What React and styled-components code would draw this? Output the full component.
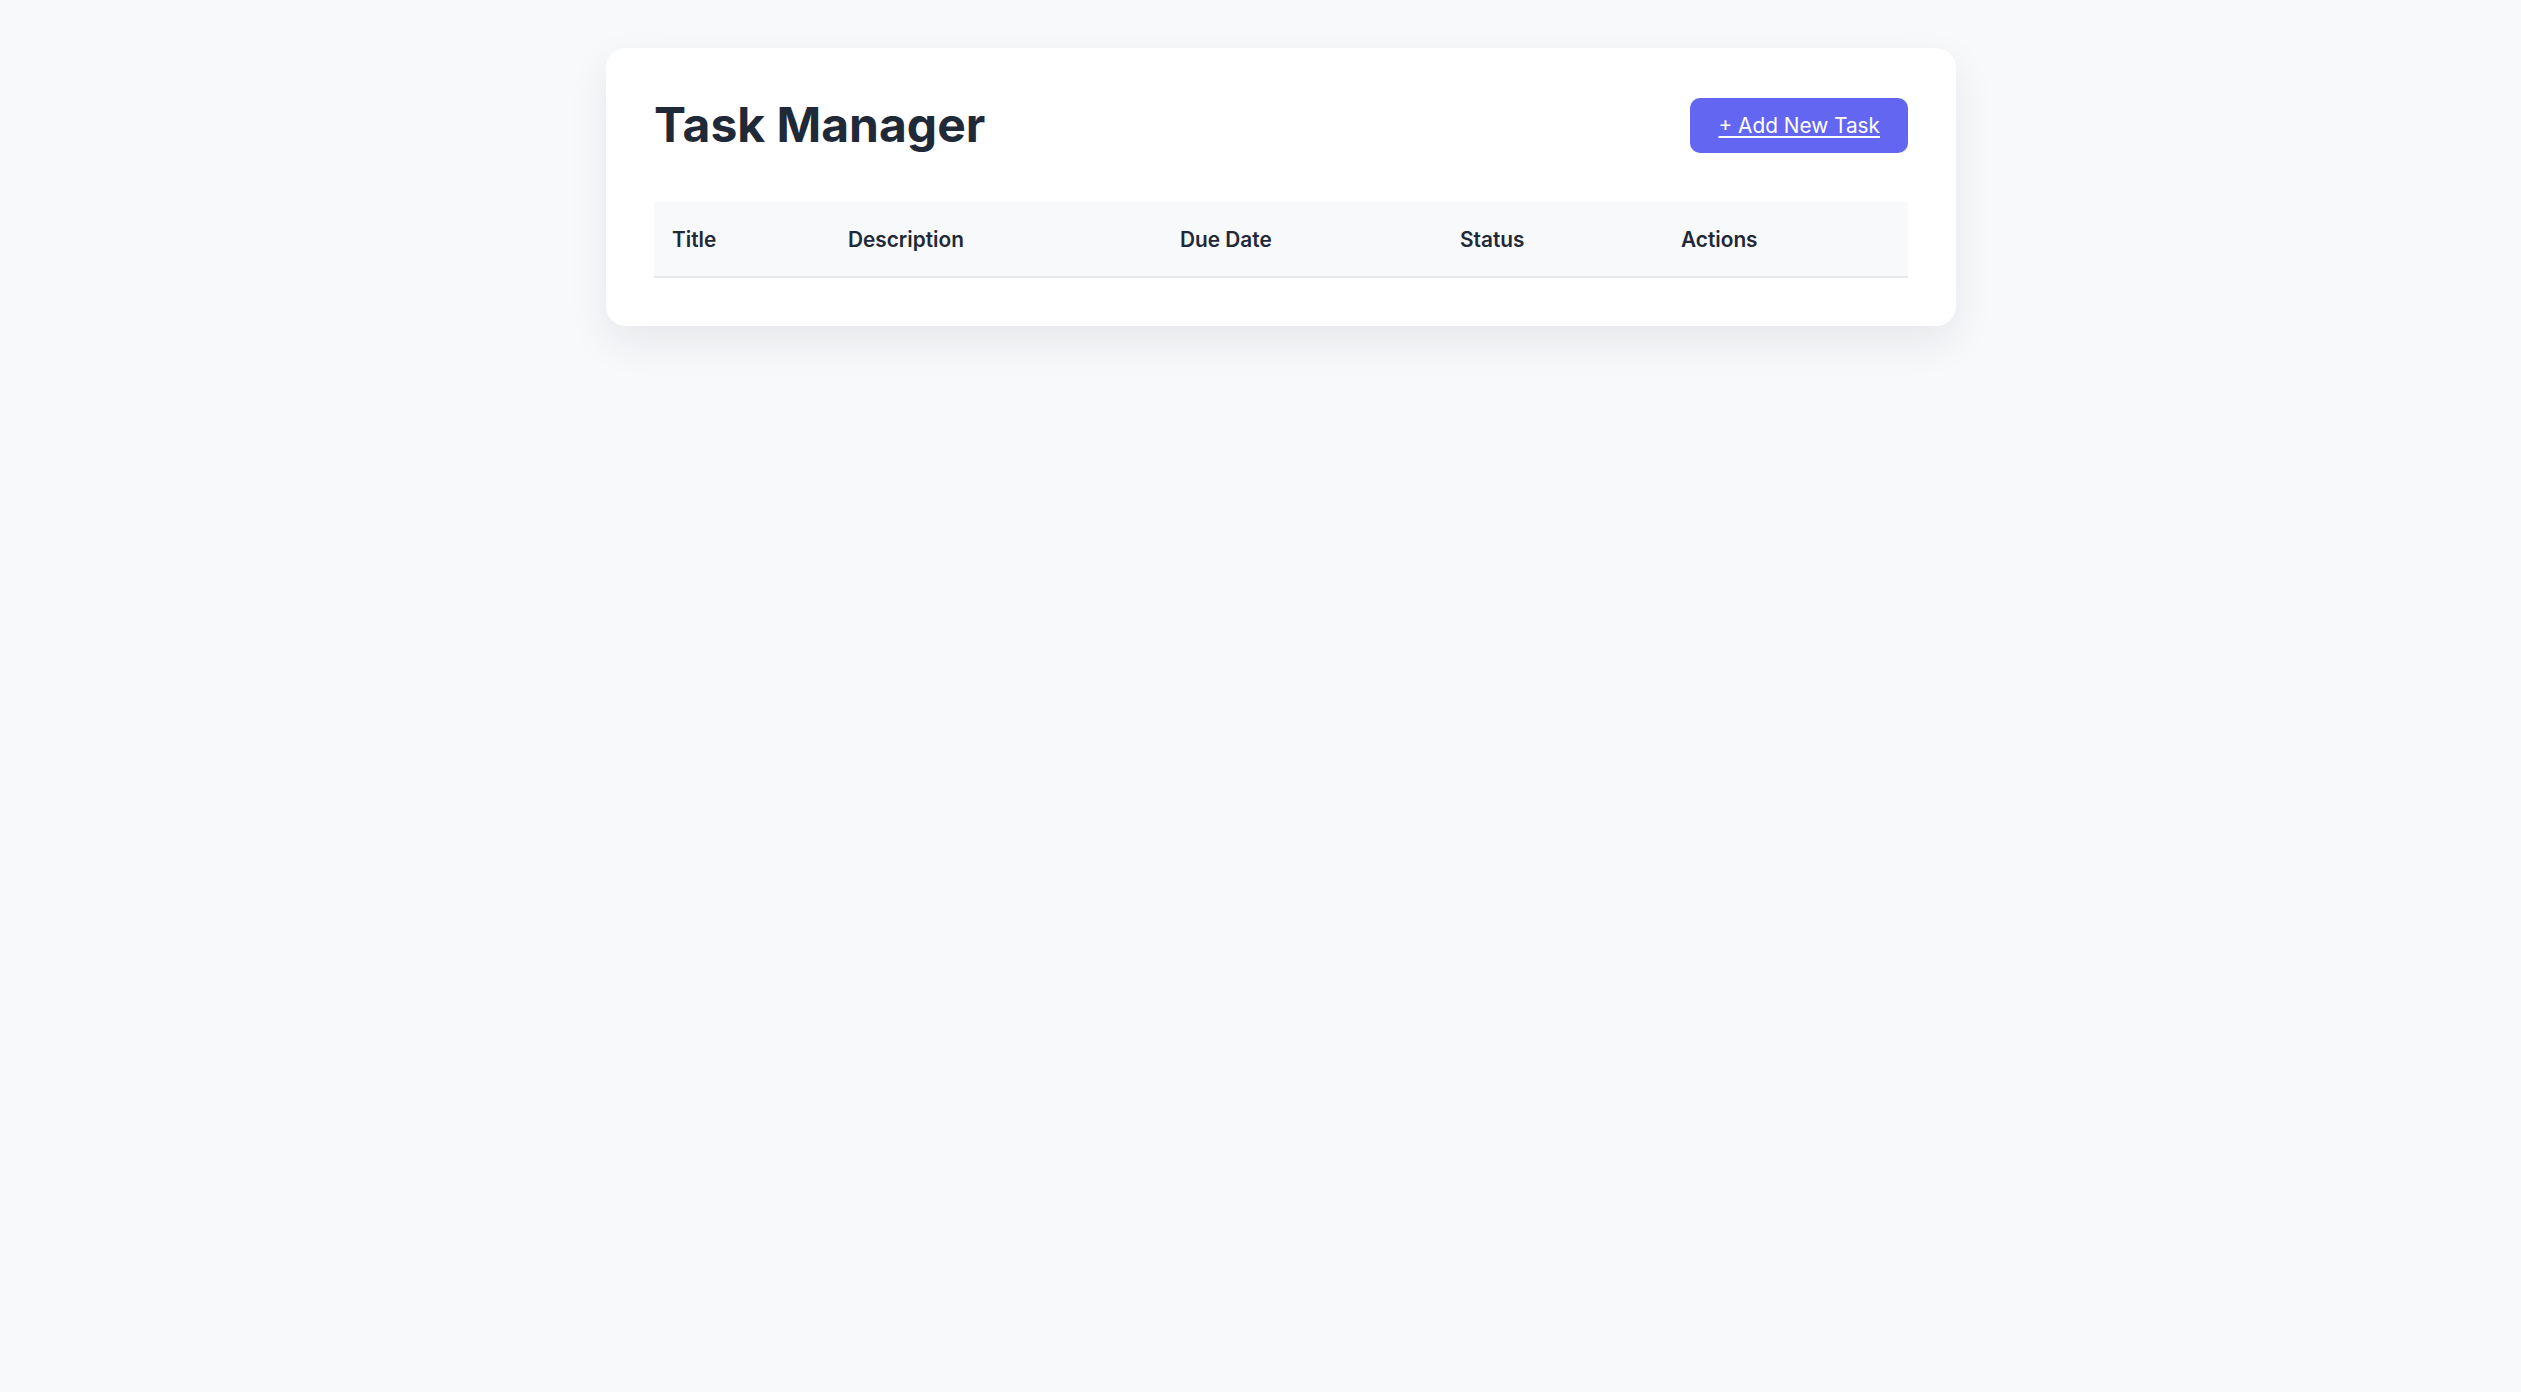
import styled, { createGlobalStyle } from "styled-components";

const GlobalStyle = createGlobalStyle`
  * {
    box-sizing: border-box;
  }
  body {
    margin: 0;
    background: #f8f9fb;
    font-family: Inter, "Noto Sans", sans-serif;
    color: #1f2937;
  }
`;

const Page = styled.div`
  min-height: 100vh;
  display: flex;
  justify-content: center;
  align-items: flex-start;
  padding: 48px 0 48px 41px;
`;

const Card = styled.div`
  width: 1350px;
  background: #ffffff;
  border-radius: 20px;
  padding: 48px;
  box-shadow: 0 16px 40px rgba(17, 24, 39, 0.08);
`;

const Header = styled.div`
  display: flex;
  align-items: center;
  justify-content: space-between;
  margin-bottom: 48px;
`;

const Heading = styled.h1`
  margin: 0;
  font-size: 48px;
  font-weight: 700;
  line-height: 58px;
  color: #1f2937;
`;

const AddButton = styled.a`
  display: inline-flex;
  align-items: center;
  height: 55px;
  padding: 0 28px;
  border-radius: 10px;
  background: #6366f1;
  color: #ffffff;
  font-size: 20.8px;
  font-weight: 400;
  text-decoration: underline;
  text-underline-offset: 3px;
  cursor: pointer;
`;

const Table = styled.table`
  width: 100%;
  border-collapse: collapse;
  table-layout: fixed;
`;

const HeadCell = styled.th`
  width: ${(p) => p.$width}px;
  padding: 25px 18px 24px;
  background: #f8f9fb;
  border-bottom: 2px solid #e5e7eb;
  text-align: left;
  font-size: 20.8px;
  font-weight: 600;
  line-height: 25px;
  color: #1f2937;
`;

const columns = [
  { label: "Title", width: 176 },
  { label: "Description", width: 332 },
  { label: "Due Date", width: 280 },
  { label: "Status", width: 221 },
  { label: "Actions", width: 245 },
];

export default function App() {
  return (
    <>
      <GlobalStyle />
      <Page>
        <Card>
          <Header>
            <Heading>Task Manager</Heading>
            <AddButton href="#">+ Add New Task</AddButton>
          </Header>
          <Table>
            <thead>
              <tr>
                {columns.map((c) => (
                  <HeadCell key={c.label} $width={c.width}>
                    {c.label}
                  </HeadCell>
                ))}
              </tr>
            </thead>
            <tbody />
          </Table>
        </Card>
      </Page>
    </>
  );
}
